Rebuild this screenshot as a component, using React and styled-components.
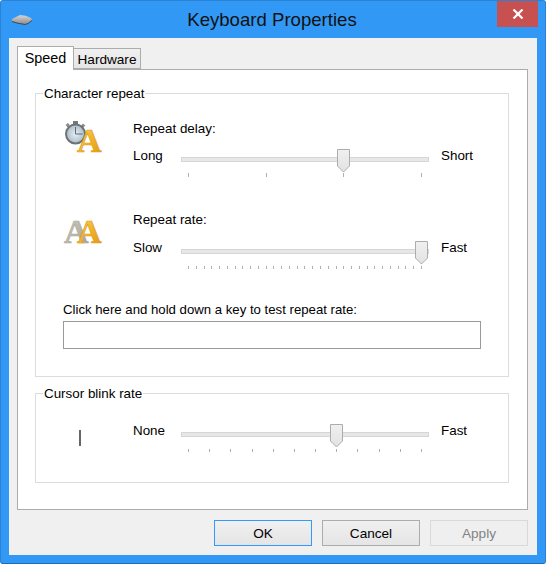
import React from 'react';
import styled, { createGlobalStyle } from 'styled-components';

const Global = createGlobalStyle`
  html, body { margin: 0; padding: 0; background: #fff; }
  * { box-sizing: border-box; }
`;
const Win = styled.div`
  width: 546px; height: 564px; background: #3199f5;
  border: 1px solid #2a82d0; border-bottom-color: #1f6db3;
  border-radius: 3px;
  padding: 0 8px 8px; display: flex; flex-direction: column;
  font: 13.4px/15px "Liberation Sans", Arial, sans-serif; color: #000;
`;
const TitleBar = styled.div`
  height: 37px; margin: 0 -1px 0 -8px; display: grid; grid-template-columns: 1fr auto 1fr; align-items: start;
`;
const AppIcon = styled.svg`
  width: 22px; height: 11px; margin: 13px 0 0 10px; display: block;
`;
const Title = styled.div`
  font-size: 18.6px; line-height: 22px; padding: 8px 0 0 5px; color: #111;
`;
const Close = styled.div`
  justify-self: end; width: 41px; height: 26px; background: #c75050;
  display: flex; align-items: center; justify-content: center;
`;
const Client = styled.div`
  flex: 1; background: #f0f0f0; padding: 8px 9px 0 8px; display: flex; flex-direction: column;
`;
const Tabs = styled.div`
  height: 24px; display: flex; align-items: flex-end; position: relative; z-index: 1; margin-bottom: -1px;
`;
const Tab = styled.div`
  height: ${p => p.$active ? 24 : 21}px;
  width: ${p => p.$active ? 57 : 68}px;
  margin-left: ${p => p.$active ? 0 : -1}px;
  margin-bottom: ${p => p.$active ? 0 : 1}px;
  background: ${p => p.$active ? '#fff' : 'linear-gradient(#f0f0f0,#e5e5e5)'};
  border: 1px solid #acacac;
  border-bottom: ${p => p.$active ? 'none' : '1px solid #acacac'};
  font-size: ${p => p.$active ? 14.4 : 13.6}px;
  padding-top: ${p => p.$active ? 4 : 3}px; text-align: center;
  position: relative; z-index: ${p => p.$active ? 2 : 1};
`;
const Panel = styled.div`
  width: 511px; height: 441px; background: #fff; border: 1px solid #acacac;
  padding: 16px 17px 0 17px; display: flex; flex-direction: column; gap: 9px;
`;
const Group = styled.fieldset`
  margin: 0; min-width: 0; width: 474px; height: ${p => p.$h}px;
  border: 1px solid #dcdcdc; padding: 0;
`;
const Legend = styled.legend`
  margin-left: 7px; padding: 0 1px; line-height: 15px;
`;
const GroupBody = styled.div`
  padding: ${p => p.$top}px 0 0 27px;
`;
const Setting = styled.div`
  display: grid; grid-template-columns: 70px 1fr; margin-bottom: ${p => p.$mb || 0}px;
`;
const IconCell = styled.div`
  padding-top: ${p => p.$top || 0}px;
`;
const SettingBody = styled.div`
  display: flex; flex-direction: column; gap: ${p => p.$gap}px;
`;
const SliderRow = styled.div`
  display: grid; grid-template-columns: 48px 248px auto; height: 29px;
`;
const EndLabel = styled.div`
  margin-top: -1px;
  padding-left: ${p => p.$right ? 12 : 0}px;
`;
const Slider = styled.div`
  position: relative; height: 29px;
`;
const Track = styled.div`
  position: absolute; left: 0; right: 0; top: 8px; height: 5px; background: #e7e7e7; border: 1px solid #d6d6d6;
`;
const Thumb = styled.svg`
  position: absolute; top: 0; width: 13px; height: 24px; display: block;
`;
const Ticks = styled.div`
  position: absolute; left: 7px; right: 7px; top: 24px; height: 4px;
  display: flex; justify-content: space-between; align-items: flex-end;
`;
const Tick = styled.i`
  display: block; width: 1px; height: ${p => p.$h || 4}px; background: #b0b0b0;
`;
const TestLabel = styled.div`
  font-size: 13.2px; margin-bottom: 4px;
`;
const TestBox = styled.div`
  width: 418px; height: 28px; border: 1px solid #9a9a9a; background: #fff;
`;
const Footer = styled.div`
  display: flex; justify-content: flex-end; gap: 10px; margin-top: 10px;
`;
const Btn = styled.div`
  width: 98px; height: 26px; display: flex; align-items: center; justify-content: center;
  font-size: 13.6px;
  border: 1px solid ${p => p.$primary ? '#3399ff' : p.$disabled ? '#d9d9d9' : '#acacac'};
  background: ${p => p.$disabled ? '#efefef' : 'linear-gradient(#f0f0f0,#e5e5e5)'};
  color: ${p => p.$disabled ? '#838383' : '#000'};
`;
const IconSvg = styled.svg`
  display: block; overflow: visible;
`;
const CursorIcon = styled.div`
  width: 2px; height: 16px; background: #666; margin-left: 16px;
`;

function SliderCtl({ value, ticks, tickH }) {
  return (
    <Slider>
      <Track />
      <Ticks>{Array.from({ length: ticks }).map((_, i) => <Tick key={i} $h={tickH} />)}</Ticks>
      <Thumb viewBox="0 0 13 24" style={{ left: Math.round(value * 234) }}>
        <defs>
          <linearGradient id="th" x1="0" x2="0" y1="0" y2="1">
            <stop offset="0" stopColor="#f0f0f0" />
            <stop offset="1" stopColor="#e2e2e2" />
          </linearGradient>
        </defs>
        <path d="M.5.5h12v16.5l-6 6-6-6z" fill="url(#th)" stroke="#acacac" />
      </Thumb>
    </Slider>
  );
}

const KbIcon = () => (
  <AppIcon viewBox="0 0 22 11">
    <defs>
      <linearGradient id="kb" x1="0" x2="0" y1="0" y2="1">
        <stop offset="0" stopColor="#d6d6d6" />
        <stop offset="1" stopColor="#8f8f8f" />
      </linearGradient>
    </defs>
    <path d="M1 5 L9 1 Q15 1 20 4 L21 6 Q18 9 14 10 Q6 9 1 7z" fill="url(#kb)" />
    <path d="M1 7 Q6 9 14 10 Q18 9 21 6 L21 7 Q18 10 14 11 Q6 10 1 8z" fill="#4a4a4a" />
  </AppIcon>
);

const Letter = ({ x, y, fill, stroke }) => (
  <text x={x} y={y} fontFamily="Liberation Serif" fontWeight="700" fontSize="34" fill={fill} stroke={stroke} strokeWidth=".7">A</text>
);

const Grads = ({ id }) => (
  <defs>
    <linearGradient id={id} x1="0" x2="1" y1="0" y2="1">
      <stop offset="0" stopColor="#fbe08a" />
      <stop offset=".5" stopColor="#f2b52c" />
      <stop offset="1" stopColor="#dc9410" />
    </linearGradient>
    <linearGradient id={id + 'g'} x1="0" x2="1" y1="0" y2="1">
      <stop offset="0" stopColor="#d5d2c8" />
      <stop offset="1" stopColor="#9f9c8e" />
    </linearGradient>
    <radialGradient id={id + 'c'}>
      <stop offset="0" stopColor="#e6eef3" />
      <stop offset="1" stopColor="#a9bcc9" />
    </radialGradient>
  </defs>
);

const DelayIcon = () => (
  <IconSvg width="40" height="36" viewBox="0 0 40 36">
    <Grads id="d" />
    <rect x="10" y="0" width="5" height="3" fill="#777" />
    <rect x="3" y="3" width="3" height="3" fill="#888" transform="rotate(-40 4 4)" />
    <rect x="19" y="3" width="3" height="3" fill="#888" transform="rotate(40 20 4)" />
    <circle cx="12.5" cy="13" r="9.5" fill="url(#dc)" stroke="#6e7175" strokeWidth="2" />
    <path d="M12.5 13h7M12.5 6v7" stroke="#667" strokeWidth="1" />
    <Letter x={14} y={31} fill="url(#d)" stroke="#e0a020" />
  </IconSvg>
);
const RateIcon = () => (
  <IconSvg width="40" height="36" viewBox="0 0 40 36">
    <Grads id="r" />
    <Letter x={1} y={31} fill="url(#rg)" stroke="#b0ad9f" />
    <Letter x={14} y={31} fill="url(#r)" stroke="#e0a020" />
  </IconSvg>
);

export default function App() {
  return (
    <Win>
      <Global />
      <TitleBar>
        <KbIcon />
        <Title>Keyboard Properties</Title>
        <Close>
          <svg width="12" height="10" viewBox="0 0 12 10">
            <path d="M1.5.5 10.5 9.5M10.5.5 1.5 9.5" stroke="#fff" strokeWidth="2.2" />
          </svg>
        </Close>
      </TitleBar>
      <Client>
        <Tabs>
          <Tab $active>Speed</Tab>
          <Tab>Hardware</Tab>
        </Tabs>
        <Panel>
          <Group $h={291}>
            <Legend>Character repeat</Legend>
            <GroupBody $top={20}>
              <Setting $mb={34}>
                <IconCell><DelayIcon /></IconCell>
                <SettingBody $gap={13}>
                  <div>Repeat delay:</div>
                  <SliderRow>
                    <EndLabel>Long</EndLabel>
                    <SliderCtl value={0.667} ticks={4} />
                    <EndLabel $right>Short</EndLabel>
                  </SliderRow>
                </SettingBody>
              </Setting>
              <Setting $mb={32}>
                <IconCell><RateIcon /></IconCell>
                <SettingBody $gap={14}>
                  <div>Repeat rate:</div>
                  <SliderRow>
                    <EndLabel>Slow</EndLabel>
                    <SliderCtl value={1} ticks={31} tickH={3} />
                    <EndLabel $right>Fast</EndLabel>
                  </SliderRow>
                </SettingBody>
              </Setting>
              <TestLabel>Click here and hold down a key to test repeat rate:</TestLabel>
              <TestBox />
            </GroupBody>
          </Group>
          <Group $h={97}>
            <Legend>Cursor blink rate</Legend>
            <GroupBody $top={23}>
              <Setting>
                <IconCell $top={6}><CursorIcon /></IconCell>
                <SliderRow>
                  <EndLabel>None</EndLabel>
                  <SliderCtl value={0.636} ticks={12} tickH={3} />
                  <EndLabel $right>Fast</EndLabel>
                </SliderRow>
              </Setting>
            </GroupBody>
          </Group>
        </Panel>
        <Footer>
          <Btn $primary>OK</Btn>
          <Btn>Cancel</Btn>
          <Btn $disabled>Apply</Btn>
        </Footer>
      </Client>
    </Win>
  );
}
